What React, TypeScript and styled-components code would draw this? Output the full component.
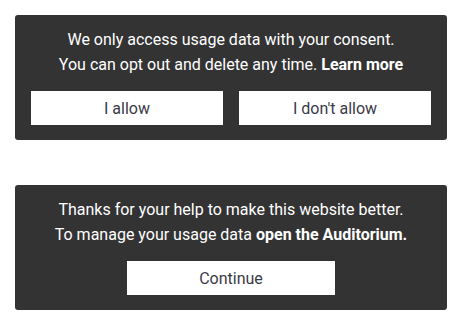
import React from "react";
import styled, { createGlobalStyle } from "styled-components";

const Global = createGlobalStyle`
  html, body { margin: 0; padding: 0; background: #fff; }
  body { font-family: Roboto, "Noto Sans", sans-serif; }
`;

const Page = styled.div`
  display: flex;
  flex-direction: column;
  gap: 45px;
  padding: 15px 12px 0 15px;
`;

const Panel = styled.section`
  width: 432px;
  box-sizing: border-box;
  background: #333333;
  border-radius: 3px;
  padding: 12px 16px 15px;
  display: flex;
  flex-direction: column;
  align-items: center;
`;

const Message = styled.p`
  margin: 0 0 14px;
  color: #ffffff;
  font-size: 16px;
  line-height: 25px;
  text-align: center;
`;

const Strong = styled.b`
  font-weight: 700;
`;

const Actions = styled.div<{ $single?: boolean }>`
  display: grid;
  grid-template-columns: ${(p) => (p.$single ? "208px" : "1fr 1fr")};
  gap: 16px;
  width: ${(p) => (p.$single ? "auto" : "100%")};
`;

const Button = styled.button`
  height: 34px;
  border: none;
  border-radius: 0;
  background: #ffffff;
  color: #3a3a48;
  font-family: Roboto, "Noto Sans", sans-serif;
  font-size: 16px;
  padding: 0;
  cursor: pointer;
`;

export default function App() {
  return (
    <>
      <Global />
      <Page>
        <Panel>
          <Message>
            We only access usage data with your consent.
            <br />
            You can opt out and delete any time. <Strong>Learn more</Strong>
          </Message>
          <Actions>
            <Button>I allow</Button>
            <Button>I don't allow</Button>
          </Actions>
        </Panel>
        <Panel>
          <Message>
            Thanks for your help to make this website better.
            <br />
            To manage your usage data <Strong>open the Auditorium.</Strong>
          </Message>
          <Actions $single>
            <Button>Continue</Button>
          </Actions>
        </Panel>
      </Page>
    </>
  );
}
